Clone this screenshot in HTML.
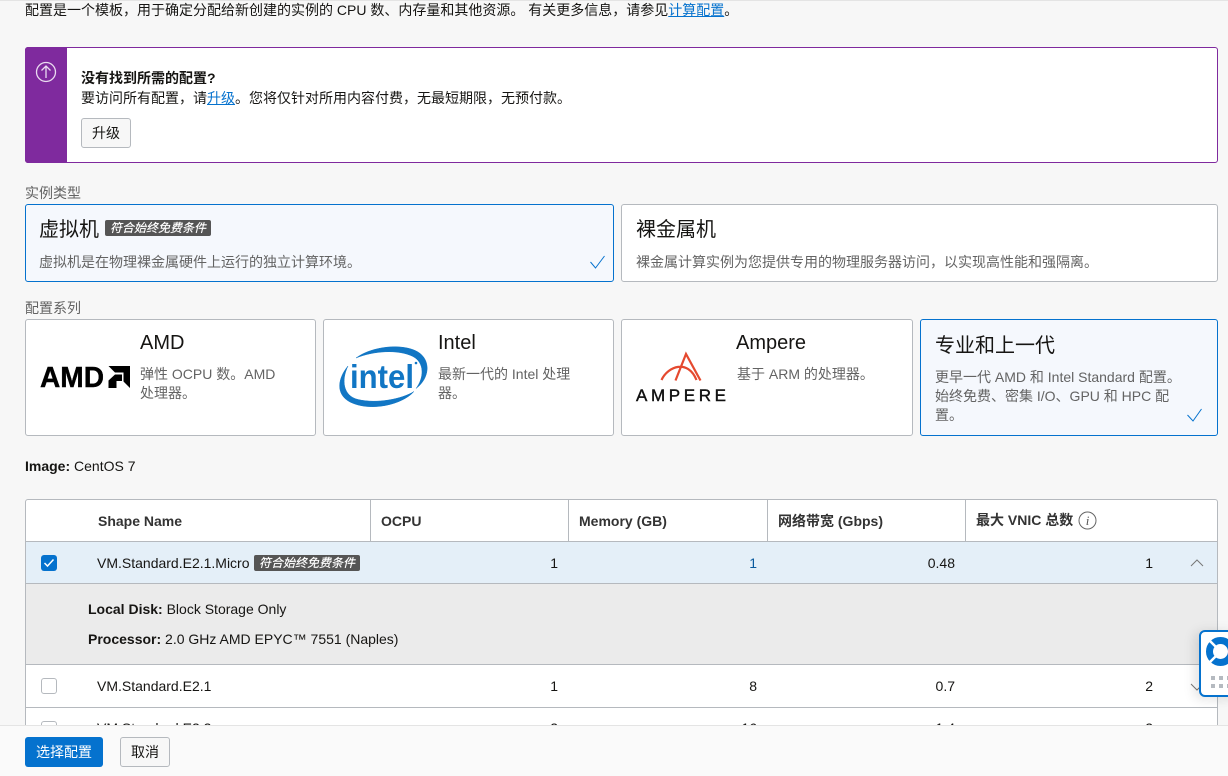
<!DOCTYPE html>
<html lang="zh"><head><meta charset="utf-8"><title>配置</title>
<style>
html,body{margin:0;padding:0}
body{width:1228px;height:776px;overflow:hidden;position:relative;background:#f7f7f7;color:#161513;font:14px/20px "Liberation Sans","Noto Sans CJK SC",sans-serif}
.a{position:absolute;box-sizing:border-box}
.t{position:absolute;white-space:nowrap;line-height:20px}
a{color:#0572ce;text-decoration:underline}
.card{position:absolute;box-sizing:border-box;background:#fff;border:1px solid #b5b9be;border-radius:3px}
.sel{background:#f5f8fd;border-color:#0572ce}
.h{font-size:20px;line-height:28px}
.g{color:#636363}
.tag{position:absolute;height:16px;width:106px;background:#555;border-radius:2px;color:#fff;font-size:12px;line-height:16px;font-style:italic;text-align:center;white-space:nowrap;text-shadow:0 0 .5px #fff}
.th{font-weight:bold;color:#333;font-size:14px}
.r{text-align:right;width:60px}
.v{background:#b5b9be;width:1px;top:500px;height:41px;position:absolute}
.hl{position:absolute;left:26px;width:1191px;height:1px;background:#b5b9be}
.cb{position:absolute;left:41px;width:16px;height:16px;box-sizing:border-box;border-radius:3px;border:1px solid #b5b9be;background:#fff}
svg{position:absolute;overflow:visible}
</style></head><body>
<div class="a" style="left:0;top:0;width:1228px;height:1px;background:#e4e4e4"></div>
<div class="t" style="left:25px;top:0">配置是一个模板，用于确定分配给新创建的实例的 CPU 数、内存量和其他资源。 有关更多信息，请参见<a>计算配置</a>。</div>

<div class="a" style="left:25px;top:47px;width:1193px;height:116px;background:#fff;border:1px solid #7f2a9e;border-radius:3px"></div>
<div class="a" style="left:25px;top:47px;width:42px;height:116px;background:#7f2a9e;border-radius:3px 0 0 3px"></div>
<svg style="left:0;top:0" width="80" height="100" fill="none" stroke="#eadcf0" stroke-width="1.3"><circle cx="46" cy="72" r="9.5"/><path d="M46 78V66.5M41.5 70.5L46 66L50.5 70.5"/></svg>
<div class="t" style="left:81px;top:68px;font-weight:bold">没有找到所需的配置?</div>
<div class="t" style="left:81px;top:88px">要访问所有配置，请<a>升级</a>。您将仅针对所用内容付费，无最短期限，无预付款。</div>
<div class="a" style="left:81px;top:118px;width:50px;height:30px;background:#f7f7f7;border:1px solid #b5b9be;border-radius:3px;text-align:center;line-height:28px">升级</div>

<div class="t g" style="left:25px;top:183px">实例类型</div>
<div class="card sel" style="left:25px;top:204px;width:589px;height:78px"></div>
<div class="t h" style="left:39px;top:216px">虚拟机</div>
<div class="tag" style="left:105px;top:220px">符合始终免费条件</div>
<div class="t g" style="left:39px;top:252px">虚拟机是在物理裸金属硬件上运行的独立计算环境。</div>
<svg style="left:0;top:0" width="620" height="280" fill="none" stroke="#0572ce" stroke-width="1"><path d="M590.5 262L595.5 268L604.5 256"/></svg>
<div class="card" style="left:621px;top:204px;width:597px;height:78px"></div>
<div class="t h" style="left:636px;top:216px">裸金属机</div>
<div class="t g" style="left:636px;top:252px">裸金属计算实例为您提供专用的物理服务器访问，以实现高性能和强隔离。</div>

<div class="t g" style="left:25px;top:298px">配置系列</div>
<div class="card" style="left:25px;top:319px;width:291px;height:117px"></div>
<div class="card" style="left:323px;top:319px;width:291px;height:117px"></div>
<div class="card" style="left:621px;top:319px;width:292px;height:117px"></div>
<div class="card sel" style="left:920px;top:319px;width:298px;height:117px"></div>

<div class="t h" style="left:140px;top:329px;font-size:20px">AMD</div>
<div class="t g" style="left:140px;top:365px;line-height:19px">弹性 OCPU 数。AMD<br>处理器。</div>
<div class="t h" style="left:438px;top:329px">Intel</div>
<div class="t g" style="left:438px;top:365px;line-height:19px">最新一代的 Intel 处理<br>器。</div>
<div class="t h" style="left:736px;top:329px">Ampere</div>
<div class="t g" style="left:737px;top:364px">基于 ARM 的处理器。</div>
<div class="t h" style="left:935px;top:332px">专业和上一代</div>
<div class="t g" style="left:935px;top:368px;line-height:19px">更早一代 AMD 和 Intel Standard 配置。<br>始终免费、密集 I/O、GPU 和 HPC 配<br>置。</div>
<svg style="left:0;top:0" width="1228" height="430" fill="none" stroke="#0572ce" stroke-width="1"><path d="M1187.5 415L1193 421L1201.5 409"/></svg>

<!-- AMD logo -->
<svg style="left:0;top:0" width="140" height="400">
<text x="40" y="387" font-family="Liberation Sans" font-weight="bold" font-size="29" textLength="64" lengthAdjust="spacingAndGlyphs" stroke="#000" stroke-width=".4">AMD</text>
<polygon points="108.500,366 130,366 130,388 123.500,381.500 123.500,372.500 115,372.500" fill="#000"/>
<polygon points="115,374.500 122,374.500 122,381 116.500,381 116.500,388 108.500,388 108.500,380.500" fill="#000"/>
</svg>
<!-- Intel logo -->
<svg style="left:0;top:0" width="440" height="420" fill="none">
<path d="M348 366C338 378 335 394 350 402C370 412 402 405 414 391.500C402 399 377 404 358 399.500C343 396 341 380 348 366Z" fill="#1176c4" stroke="#1176c4" stroke-width=".5"/>
<path d="M356 358C372 346 403 343 418 352C431 360 430 378 416 388.500C424 378 425 363 413 356.500C398 349 373 351 356 358Z" fill="#1176c4" stroke="#1176c4" stroke-width=".5"/>
<text x="350" y="388" font-family="Liberation Sans" font-weight="bold" font-size="33" fill="#1176c4" textLength="64" lengthAdjust="spacingAndGlyphs">intel</text>
<circle cx="416" cy="363" r="1.300" fill="#1176c4"/>
</svg>
<!-- Ampere logo -->
<svg style="left:0;top:0" width="740" height="420" fill="none">
<path d="M675.500 380.500L686 354L700.500 380.500M661.500 380C668 366 688 359 696.500 380" stroke="#e5492f" stroke-width="2.200"/>
<text x="636" y="401" font-family="Liberation Sans" font-size="17" fill="#111" textLength="90" stroke="#111" stroke-width=".4">AMPERE</text>
</svg>

<div class="t" style="left:25px;top:456px"><b>Image:</b> CentOS 7</div>

<!-- table -->
<div class="a" style="left:25px;top:499px;width:1193px;height:241px;background:#fff;border:1px solid #b5b9be;border-radius:3px 3px 0 0"></div>
<div class="v" style="left:370px"></div><div class="v" style="left:568px"></div><div class="v" style="left:767px"></div><div class="v" style="left:965px"></div>
<div class="hl" style="top:541px"></div>
<div class="t th" style="left:98px;top:511px">Shape Name</div>
<div class="t th" style="left:381px;top:511px">OCPU</div>
<div class="t th" style="left:579px;top:511px">Memory (GB)</div>
<div class="t th" style="left:778px;top:511px">网络带宽 (Gbps)</div>
<div class="t th" style="left:976px;top:510px">最大 VNIC 总数</div>
<svg style="left:1078px;top:511px" width="20" height="20" fill="none"><circle cx="9.500" cy="9.500" r="8.500" stroke="#666"/><text x="9.500" y="14" text-anchor="middle" font-family="Liberation Serif" font-style="italic" font-size="13" fill="#555">i</text></svg>

<div class="a" style="left:26px;top:542px;width:1191px;height:41px;background:#e4eff8"></div>
<div class="hl" style="top:583px"></div>
<div class="a" style="left:26px;top:584px;width:1191px;height:80px;background:#ebebeb"></div>
<div class="hl" style="top:664px"></div>
<div class="hl" style="top:707px"></div>

<div class="a" style="left:41px;top:555px;width:16px;height:16px;background:#0572ce;border-radius:3px"></div>
<svg style="left:41px;top:555px" width="16" height="16" fill="none" stroke="#fff" stroke-width="1.500"><path d="M3.500 8L6.500 11L12.500 4.500"/></svg>
<div class="t" style="left:97px;top:553px">VM.Standard.E2.1.Micro</div>
<div class="tag" style="left:254px;top:555px">符合始终免费条件</div>
<div class="t r" style="left:498px;top:553px">1</div>
<div class="t r" style="left:697px;top:553px;color:#0a5a9e">1</div>
<div class="t r" style="left:895px;top:553px">0.48</div>
<div class="t r" style="left:1093px;top:553px">1</div>
<svg style="left:1190px;top:558px" width="14" height="10" fill="none" stroke="#777"><path d="M1 8L7 2L13 8"/></svg>

<div class="t" style="left:88px;top:599px"><b>Local Disk:</b> Block Storage Only</div>
<div class="t" style="left:88px;top:629px"><b>Processor:</b> 2.0 GHz AMD EPYC™ 7551 (Naples)</div>

<div class="cb" style="top:678px"></div>
<div class="t" style="left:97px;top:676px">VM.Standard.E2.1</div>
<div class="t r" style="left:498px;top:676px">1</div>
<div class="t r" style="left:697px;top:676px">8</div>
<div class="t r" style="left:895px;top:676px">0.7</div>
<div class="t r" style="left:1093px;top:676px">2</div>
<svg style="left:1190px;top:682px" width="14" height="10" fill="none" stroke="#777"><path d="M1 2L7 8L13 2"/></svg>

<div class="cb" style="top:721px"></div>
<div class="t" style="left:97px;top:718px">VM.Standard.E2.2</div>
<div class="t r" style="left:498px;top:718px">2</div>
<div class="t r" style="left:697px;top:718px">16</div>
<div class="t r" style="left:895px;top:718px">1.4</div>
<div class="t r" style="left:1093px;top:718px">2</div>

<!-- help widget -->
<div class="a" style="left:1199px;top:630px;width:40px;height:67px;background:#fff;border:2px solid #0572ce;border-radius:6px;box-shadow:-4px 2px 12px rgba(0,0,0,.12)"></div>
<svg style="left:0;top:0" width="1228" height="700" fill="none">
<circle cx="1220.500" cy="651.500" r="11" stroke="#0572ce" stroke-width="7"/>
<path d="M1209.500 640.500L1215.500 646.500M1209.500 662.500L1215.500 656.500" stroke="#fff" stroke-width="2.500"/>
<g fill="#b5bac0"><rect x="1211" y="676" width="4" height="4"/><rect x="1219" y="676" width="4" height="4"/><rect x="1227" y="676" width="1" height="4"/><rect x="1211" y="684" width="4" height="4"/><rect x="1219" y="684" width="4" height="4"/><rect x="1227" y="684" width="1" height="4"/></g>
</svg>

<!-- footer -->
<div class="a" style="left:0;top:725px;width:1228px;height:51px;background:#fafafa;border-top:1px solid #e4e4e4"></div>
<div class="a" style="left:25px;top:737px;width:78px;height:30px;background:#0572ce;border-radius:3px;color:#fff;text-align:center;line-height:30px">选择配置</div>
<div class="a" style="left:120px;top:737px;width:50px;height:30px;background:#f7f7f7;border:1px solid #b5b9be;border-radius:3px;text-align:center;line-height:28px">取消</div>
</body></html>
